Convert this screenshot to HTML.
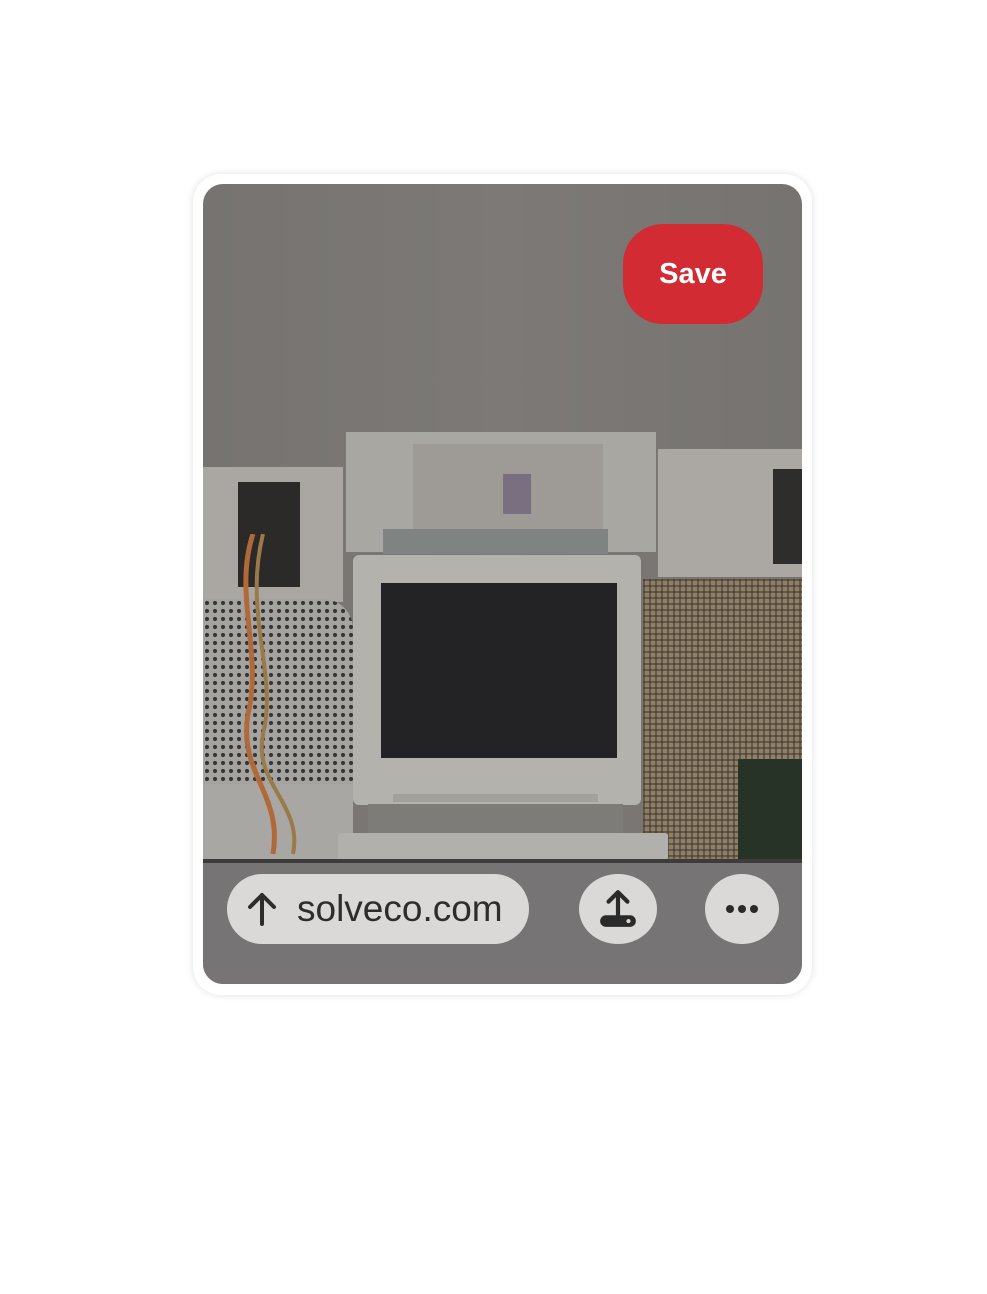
<!DOCTYPE html>
<html><head><meta charset="utf-8"><style>
*{margin:0;padding:0;box-sizing:border-box}
body{width:987px;height:1294px;background:#fff;position:relative;overflow:hidden;font-family:"Liberation Sans",sans-serif}
.card{position:absolute;left:193px;top:174px;width:619px;height:821px;background:#fff;border-radius:28px;box-shadow:0 0 8px rgba(0,0,0,.12)}
.img{position:absolute;left:203px;top:184px;width:599px;height:800px;border-radius:20px;overflow:hidden;background:linear-gradient(90deg,#767370,#7c7976 50%,#767370)}
.a{position:absolute}
.mesh{background-color:#a6a4a0;background-image:radial-gradient(#3a3836 35%,transparent 40%);background-size:8px 8px}
.grid{background-color:#8d7f68;background-image:linear-gradient(90deg,rgba(60,50,40,.5) 2px,transparent 2px),linear-gradient(rgba(60,50,40,.5) 2px,transparent 2px);background-size:6px 6px}
.save{position:absolute;left:623px;top:224px;width:140px;height:100px;border-radius:40px;background:#d32b33;color:#fff;font-size:29px;font-weight:bold;display:flex;align-items:center;justify-content:center}
.pill{position:absolute;left:227px;top:874px;width:302px;height:70px;border-radius:35px;background:#dad9d8;display:flex;align-items:center;font-size:37px;color:#2d2d2d}
.circ{position:absolute;top:874px;height:70px;border-radius:50%;background:#dad9d8;display:flex;align-items:center;justify-content:center}
</style></head><body>
<div class="card"></div>
<div class="img">
  <div class="a" style="left:143px;top:248px;width:310px;height:120px;background:#a9a7a2"></div>
  <div class="a" style="left:210px;top:260px;width:190px;height:85px;background:#9e9b96"></div>
  <div class="a" style="left:300px;top:290px;width:28px;height:40px;background:#7a6f80"></div>
  <div class="a" style="left:180px;top:345px;width:225px;height:25px;background:#7f8483"></div>
  <div class="a" style="left:0;top:283px;width:140px;height:135px;background:#aaa7a2"></div>
  <div class="a" style="left:35px;top:298px;width:62px;height:105px;background:#2c2a29"></div>
  <div class="a mesh" style="left:0;top:415px;width:150px;height:200px;border-radius:0 30px 0 0"></div>
  <div class="a" style="left:0;top:600px;width:150px;height:76px;background:#a9a7a3"></div>
  <svg class="a" style="left:20px;top:350px" width="90" height="330"><path d="M30 0 C10 60 40 120 25 180 C15 240 60 260 50 320" stroke="#b06a3a" stroke-width="5" fill="none"/><path d="M40 0 C20 80 55 140 40 200 C30 250 80 270 70 320" stroke="#9a7a4a" stroke-width="4" fill="none"/></svg>
  <div class="a" style="left:455px;top:265px;width:144px;height:128px;background:#aba8a3"></div>
  <div class="a" style="left:570px;top:285px;width:29px;height:95px;background:#2f2d2b"></div>
  <div class="a grid" style="left:440px;top:395px;width:159px;height:280px"></div>
  <div class="a" style="left:535px;top:575px;width:64px;height:100px;background:#263326"></div>
  <div class="a" style="left:150px;top:371px;width:288px;height:250px;background:#b3b2ad;border-radius:6px"></div>
  <div class="a" style="left:178px;top:399px;width:236px;height:175px;background:#232325"></div>
  <div class="a" style="left:165px;top:620px;width:255px;height:40px;background:#7e7c78"></div>
  <div class="a" style="left:190px;top:610px;width:205px;height:8px;background:#a3a19c"></div>
  <div class="a" style="left:135px;top:649px;width:330px;height:28px;background:#b1b0ac;border-radius:3px"></div>
  <div class="a" style="left:0;top:675px;width:599px;height:4px;background:#3e3c3a"></div>
  <div class="a" style="left:0;top:679px;width:599px;height:121px;background:#767475"></div>
</div>
<div class="save">Save</div>
<div class="pill"><svg style="margin-left:20px;margin-right:20px" width="30" height="34" viewBox="0 0 30 34"><path d="M15 32V3M3 15L15 3L27 15" stroke="#2d2d2d" stroke-width="4" fill="none" stroke-linecap="round" stroke-linejoin="round"/></svg>solveco.com</div>
<div class="circ" style="left:579px;width:78px"><svg width="42" height="42" viewBox="0 0 40 40"><path d="M20 27V4M11 13L20 4L29 13" stroke="#2a2a2a" stroke-width="4" fill="none" stroke-linecap="round" stroke-linejoin="round"/><rect x="3" y="26" width="34" height="11" rx="5.5" fill="#2a2a2a"/><circle cx="30" cy="31.5" r="2" fill="#dad9d8"/></svg></div>
<div class="circ" style="left:705px;width:74px"><svg width="34" height="10"><circle cx="5" cy="5" r="4" fill="#2a2a2a"/><circle cx="17" cy="5" r="4" fill="#2a2a2a"/><circle cx="29" cy="5" r="4" fill="#2a2a2a"/></svg></div>
</body></html>
